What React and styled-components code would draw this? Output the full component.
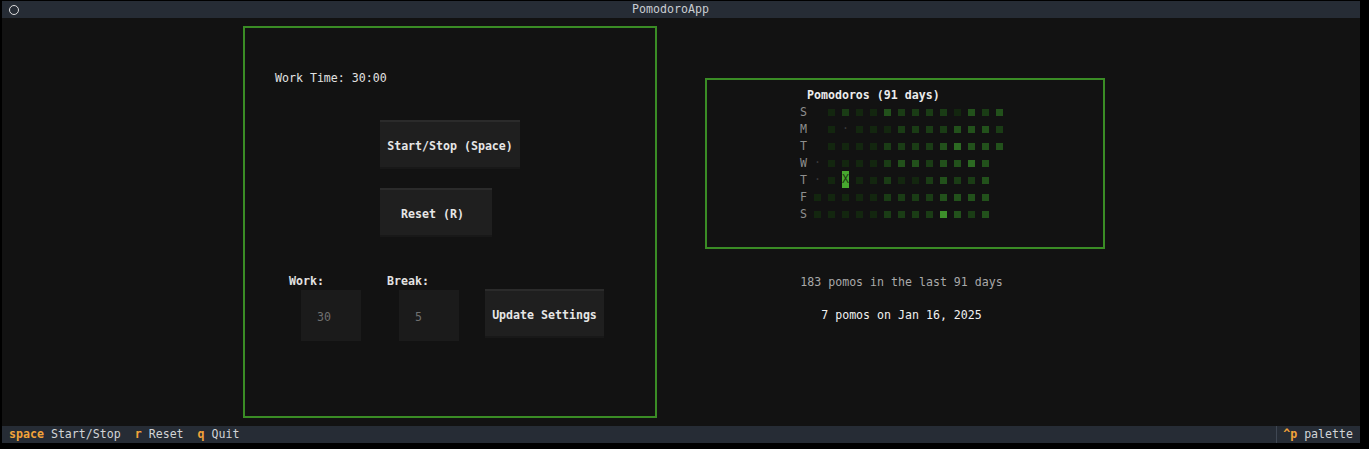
import React from "react";
import styled, { createGlobalStyle } from "styled-components";

const GlobalStyle = createGlobalStyle`
  html, body {
    margin: 0;
    padding: 0;
    background: #000;
  }
`;

const Screen = styled.div`
  margin: 1px 0 0 2px;
  width: 1358px;
  height: 442px;
  display: flex;
  flex-direction: column;
  font-family: "DejaVu Sans Mono", "Liberation Mono", monospace;
  font-size: 11.6px;
  line-height: 17px;
  color: #e2e2e2;
  background: #121212;
`;

const Header = styled.div`
  height: 17px;
  flex: none;
  display: flex;
  align-items: center;
  background: #262c35;
  color: #c9cdd2;
`;

const HeaderIcon = styled.div`
  width: 56px;
  display: flex;
  align-items: center;
`;

const Circle = styled.span`
  width: 10px;
  height: 10px;
  margin-left: 7px;
  box-sizing: border-box;
  border: 1.6px solid #dcdcdc;
  border-radius: 50%;
`;

const HeaderTitle = styled.div`
  flex: 1;
  text-align: center;
  padding-right: 7px;
`;

const HeaderSpace = styled.div`
  width: 70px;
`;

const Main = styled.div`
  flex: 1;
  display: flex;
  align-items: flex-start;
`;

const LeftPanel = styled.div`
  margin: 8px 0 0 241px;
  width: 414px;
  height: 392px;
  box-sizing: border-box;
  border: 2px solid #3a8c25;
  display: flex;
  flex-direction: column;
  align-items: flex-start;
`;

const WorkTime = styled.div`
  margin: 42px 0 0 30px;
`;

const Button = styled.div`
  width: ${(p) => p.w}px;
  height: 49px;
  margin: ${(p) => p.m};
  box-sizing: border-box;
  padding-top: 4px;
  padding-right: ${(p) => p.pr || 0}px;
  display: flex;
  align-items: center;
  justify-content: center;
  background: #1f1f1f;
  border-top: 2px solid #2b2b2b;
  border-bottom: 2px solid #181818;
  color: #e6e6e6;
  font-weight: bold;
  white-space: pre;
`;

const SettingsRow = styled.div`
  margin: 35px 0 0 44px;
  display: flex;
  align-items: flex-start;
  gap: 26px;
`;

const Field = styled.div`
  display: flex;
  flex-direction: column;
`;

const Label = styled.div`
  font-weight: bold;
  color: #e2e2e2;
  padding-top: 1px;
`;

const Input = styled.div`
  margin-left: 12px;
  width: 60px;
  height: 51px;
  box-sizing: border-box;
  padding: 4px 0 0 16px;
  display: flex;
  align-items: center;
  background: #1b1b1b;
  color: #707070;
`;

const RightColumn = styled.div`
  margin-left: 48px;
  display: flex;
  flex-direction: column;
`;

const RightPanel = styled.div`
  margin-top: 60px;
  width: 400px;
  height: 171px;
  box-sizing: border-box;
  border: 2px solid #3a8c25;
  padding: 6px 0 0 93px;
`;

const HeatTitle = styled.div`
  padding: 1px 0 0 7px;
  height: 16px;
  font-weight: bold;
  color: #ececec;
`;

const HeatRow = styled.div`
  display: flex;
  height: 17px;
`;

const DayLetter = styled.span`
  width: 14px;
  padding-top: 1px;
  color: #8e8e8e;
`;

const Slot = styled.span`
  width: 7px;
  height: 17px;
  margin-right: ${(p) => (p.last ? 0 : 7)}px;
  position: relative;
  display: flex;
  justify-content: center;
  color: #3a3a3a;
`;

const Square = styled.span`
  position: absolute;
  left: 0;
  top: 6px;
  width: 7px;
  height: 7px;
  background: ${(p) => p.c};
`;

const Today = styled.span`
  width: 7px;
  height: 17px;
  background: #47a82f;
  color: #1c3b12;
  text-align: center;
`;

const Stats = styled.div`
  margin-top: 25px;
  width: 400px;
  box-sizing: border-box;
  padding-right: 7px;
  text-align: center;
`;

const StatLine = styled.div`
  margin-top: ${(p) => p.mt || 0}px;
  color: ${(p) => p.c};
`;

const Footer = styled.div`
  height: 17px;
  flex: none;
  display: flex;
  background: #262c35;
  color: #d2d4d7;
`;

const FooterKey = styled.div`
  display: flex;
  padding: 0 7px;
  margin-left: ${(p) => (p.right ? "auto" : 0)};
  border-left: ${(p) => (p.right ? "1px solid #3f4753" : "none")};
  padding-left: ${(p) => (p.right ? 6 : 7)}px;
`;

const Key = styled.span`
  color: #f2a33a;
  font-weight: bold;
  margin-right: 7px;
`;

const levels = {
  1: "#13260f",
  2: "#1a3c15",
  3: "#22511b",
  4: "#2c6a22",
  5: "#3d8f2b",
};

const heat = [
  ["S", "-1211322221323"],
  ["M", "-1.11122223332"],
  ["T", "-1111222234333"],
  ["W", ".111123323343-"],
  ["T", ".1X1121123223-"],
  ["F", "1111122223333-"],
  ["S", "1111122225323-"],
];

const Cell = ({ ch, last }) => {
  if (ch === "X") {
    return (
      <Slot last={last}>
        <Today>X</Today>
      </Slot>
    );
  }
  return (
    <Slot last={last}>
      {ch === "." && "·"}
      {levels[ch] && <Square c={levels[ch]} />}
    </Slot>
  );
};

const App = () => {
  return (
    <>
      <GlobalStyle />
      <Screen>
        <Header>
          <HeaderIcon>
            <Circle />
          </HeaderIcon>
          <HeaderTitle>PomodoroApp</HeaderTitle>
          <HeaderSpace />
        </Header>
        <Main>
          <LeftPanel>
            <WorkTime>Work Time: 30:00</WorkTime>
            <Button w={140} m="33px 0 0 135px">
              Start/Stop (Space)
            </Button>
            <Button w={112} pr={7} m="19px 0 0 135px">
              Reset (R)
            </Button>
            <SettingsRow>
              <Field>
                <Label>Work:</Label>
                <Input>30</Input>
              </Field>
              <Field>
                <Label>Break:</Label>
                <Input>5</Input>
              </Field>
              <Button w={119} m="17px 0 0 0">
                Update Settings
              </Button>
            </SettingsRow>
          </LeftPanel>
          <RightColumn>
            <RightPanel>
              <HeatTitle>Pomodoros (91 days)</HeatTitle>
              {heat.map(([day, cells], i) => (
                <HeatRow key={i}>
                  <DayLetter>{day}</DayLetter>
                  {cells.split("").map((ch, j) => (
                    <Cell key={j} ch={ch} last={j === cells.length - 1} />
                  ))}
                </HeatRow>
              ))}
            </RightPanel>
            <Stats>
              <StatLine c="#a9a9a9">183 pomos in the last 91 days</StatLine>
              <StatLine c="#f0f0f0" mt={16}>
                7 pomos on Jan 16, 2025
              </StatLine>
            </Stats>
          </RightColumn>
        </Main>
        <Footer>
          <FooterKey>
            <Key>space</Key>Start/Stop
          </FooterKey>
          <FooterKey>
            <Key>r</Key>Reset
          </FooterKey>
          <FooterKey>
            <Key>q</Key>Quit
          </FooterKey>
          <FooterKey right>
            <Key>^p</Key>palette
          </FooterKey>
        </Footer>
      </Screen>
    </>
  );
};

export default App;
